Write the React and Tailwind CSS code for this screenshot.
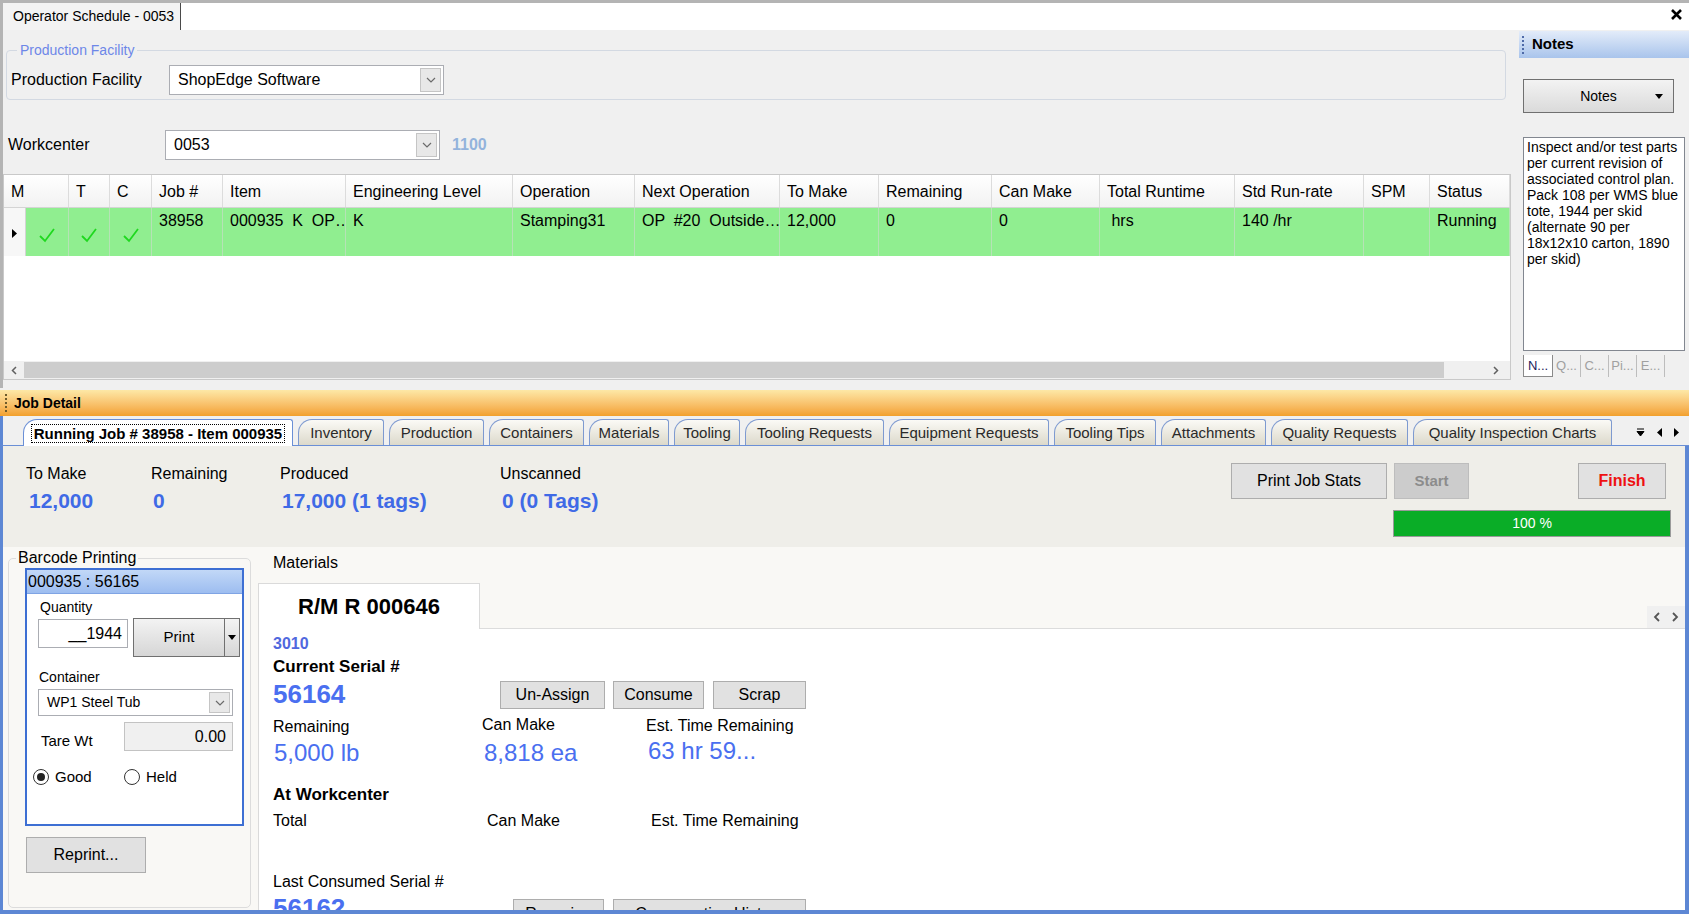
import React from 'react';

const COLS = [
  { w: 'w-[65px]', label: 'M' },
  { w: 'w-[41px]', label: 'T' },
  { w: 'w-[42px]', label: 'C' },
  { w: 'w-[71px]', label: 'Job #' },
  { w: 'w-[123px]', label: 'Item' },
  { w: 'w-[167px]', label: 'Engineering Level' },
  { w: 'w-[122px]', label: 'Operation' },
  { w: 'w-[145px]', label: 'Next Operation' },
  { w: 'w-[99px]', label: 'To Make' },
  { w: 'w-[113px]', label: 'Remaining' },
  { w: 'w-[108px]', label: 'Can Make' },
  { w: 'w-[135px]', label: 'Total Runtime' },
  { w: 'w-[129px]', label: 'Std Run-rate' },
  { w: 'w-[66px]', label: 'SPM' },
  { w: 'flex-1', label: 'Status' },
];

const ROW = [
  { w: 'w-[71px]', v: '38958' },
  { w: 'w-[123px]', v: '000935  K  OP…' },
  { w: 'w-[167px]', v: 'K' },
  { w: 'w-[122px]', v: 'Stamping31' },
  { w: 'w-[145px]', v: 'OP  #20  Outside…' },
  { w: 'w-[99px]', v: '12,000' },
  { w: 'w-[113px]', v: '0' },
  { w: 'w-[108px]', v: '0' },
  { w: 'w-[135px]', v: ' hrs' },
  { w: 'w-[129px]', v: '140 /hr' },
  { w: 'w-[66px]', v: '' },
  { w: 'flex-1', v: 'Running' },
];

const TABS = [
  { w: 'w-[86px]', label: 'Inventory' },
  { w: 'w-[95px]', label: 'Production' },
  { w: 'w-[95px]', label: 'Containers' },
  { w: 'w-[80px]', label: 'Materials' },
  { w: 'w-[66px]', label: 'Tooling' },
  { w: 'w-[139px]', label: 'Tooling Requests' },
  { w: 'w-[160px]', label: 'Equipment Requests' },
  { w: 'w-[102px]', label: 'Tooling Tips' },
  { w: 'w-[105px]', label: 'Attachments' },
  { w: 'w-[137px]', label: 'Quality Requests' },
  { w: 'w-[199px]', label: 'Quality Inspection Charts' },
];

function Chevron() {
  return (
    <svg width="10" height="6" viewBox="0 0 10 6">
      <path d="M1 1l4 4 4-4" fill="none" stroke="#6b6b6b" strokeWidth="1.2" />
    </svg>
  );
}

function Combo({ className, value, text = 'text-[16px]' }) {
  return (
    <div className={`flex items-center bg-white border border-[#abadb3] ${className}`}>
      <span className={`flex-1 pl-[8px] ${text}`}>{value}</span>
      <div className="w-[21px] self-stretch my-[2px] mr-[2px] bg-[#e8e8e8] border border-[#c5c5c5] flex items-center justify-center">
        <Chevron />
      </div>
    </div>
  );
}

function Check() {
  return (
    <svg width="18" height="16" viewBox="0 0 18 16">
      <path d="M2 9l5 5L16 2" fill="none" stroke="#1fd81f" strokeWidth="1.8" />
    </svg>
  );
}

function Grip({ color }) {
  return <div className={`w-[2px] h-[18px] border-l-[2px] border-dotted ${color}`} />;
}

function Caret({ color = '#000' }) {
  return (
    <svg width="8" height="5" viewBox="0 0 8 5">
      <path d="M0 0h8L4 5z" fill={color} />
    </svg>
  );
}

function GrayButton({ className, children }) {
  return (
    <div className={`flex items-center justify-center bg-[#e1e1e1] border border-[#adadad] text-[16px] ${className}`}>
      {children}
    </div>
  );
}

export default function App() {
  return (
    <div className="w-[1689px] h-[914px] overflow-hidden bg-[#f0f0f0] font-['Liberation_Sans',Arial,sans-serif] text-black flex flex-col">
      {/* window strip */}
      <div className="h-[30px] shrink-0 flex border-t-[3px] border-l-[3px] border-[#b4b4b4] bg-white">
        <div className="w-[178px] bg-[#f3f3f3] border-r border-[#4a4a4a] flex items-center pl-[10px] text-[14px]">
          Operator Schedule - 0053
        </div>
        <div className="flex-1" />
        <div className="w-[26px] flex items-center justify-center pb-[4px]">
          <svg width="11" height="11" viewBox="0 0 11 11">
            <path d="M1 1l9 9M10 1l-9 9" stroke="#000" strokeWidth="2.6" />
          </svg>
        </div>
      </div>

      {/* top section */}
      <div className="h-[358px] shrink-0 flex border-l-[3px] border-[#b4b4b4]">
        <div className="w-[1508px] flex flex-col">
          <fieldset className="ml-[3px] mt-[12px] w-[1500px] h-[58px] border border-[#d3d9e2] rounded-[4px] pl-[4px]">
            <legend className="ml-[6px] px-[3px] text-[14px] leading-[16px] text-[#6d87e8]">Production Facility</legend>
            <div className="flex items-center mt-[7px] h-[30px]">
              <span className="w-[158px] text-[16px]">Production Facility</span>
              <Combo className="w-[275px] h-[30px]" value="ShopEdge Software" />
            </div>
          </fieldset>

          <div className="flex items-center mt-[30px] h-[30px] pl-[5px]">
            <span className="w-[157px] text-[16px]">Workcenter</span>
            <Combo className="w-[275px] h-[30px]" value="0053" />
            <span className="ml-[12px] text-[16px] font-bold text-[#93b3dc]">1100</span>
          </div>

          {/* grid */}
          <div className="mt-[14px] w-[1508px] h-[206px] bg-white border border-[#c9c9c9] flex flex-col">
            <div className="flex h-[33px] shrink-0 border-b border-[#d4d4d4] bg-gradient-to-b from-white to-[#f2f2f2]">
              {COLS.map((c) => (
                <div key={c.label} className={`${c.w} border-r border-[#dcdcdc] flex items-center pl-[7px] pt-[2px] text-[16px]`}>
                  {c.label}
                </div>
              ))}
            </div>
            <div className="flex h-[48px] shrink-0">
              <div className="w-[22px] bg-[#f7f7f7] border-r border-[#d4d4d4] flex items-center justify-center pt-[3px]">
                <svg width="5" height="9" viewBox="0 0 5 9"><path d="M0 0l5 4.5L0 9z" fill="#000" /></svg>
              </div>
              {['w-[43px]', 'w-[41px]', 'w-[42px]'].map((w) => (
                <div key={w} className={`${w} bg-[#90ee90] border-r border-[#b6e2b6] flex items-center justify-center pt-[6px]`}>
                  <Check />
                </div>
              ))}
              {ROW.map((c, i) => (
                <div key={i} className={`${c.w} bg-[#90ee90] border-r border-[#b6e2b6] pl-[7px] pt-[1px] text-[16px] whitespace-pre`}>
                  {c.v}
                </div>
              ))}
            </div>
            <div className="flex-1" />
            <div className="h-[18px] shrink-0 flex items-center bg-[#f0f0f0]">
              <div className="w-[20px] flex justify-center">
                <svg width="6" height="9" viewBox="0 0 6 9"><path d="M5 1L1.5 4.5 5 8" fill="none" stroke="#606060" strokeWidth="1.5" /></svg>
              </div>
              <div className="w-[1420px] h-[16px] bg-[#cdcdcd]" />
              <div className="flex-1" />
              <div className="w-[20px] flex justify-center mr-[4px]">
                <svg width="6" height="9" viewBox="0 0 6 9"><path d="M1 1l3.5 3.5L1 8" fill="none" stroke="#606060" strokeWidth="1.5" /></svg>
              </div>
            </div>
          </div>
        </div>

        {/* notes panel */}
        <div className="ml-[8px] w-[170px] flex flex-col">
          <div className="mt-[1px] h-[27px] bg-gradient-to-b from-[#e3ecf9] to-[#a9c4ec] flex items-center pl-[3px]">
            <Grip color="border-[#4e6aa8]" />
            <span className="ml-[8px] text-[15px] font-bold">Notes</span>
          </div>
          <div className="mt-[21px] ml-[4px] w-[151px] h-[34px] border border-[#707070] bg-gradient-to-b from-[#f3f3f3] to-[#dadada] flex items-center justify-center relative text-[14px]">
            Notes
            <span className="absolute right-[10px] top-[14px]"><Caret /></span>
          </div>
          <div className="mt-[24px] ml-[4px] w-[162px] h-[214px] bg-white border border-[#828790] px-[3px] pt-[1px] text-[14px] leading-[16px]">
            Inspect and/or test parts per current revision of associated control plan. Pack 108 per WMS blue tote, 1944 per skid (alternate 90 per 18x12x10 carton, 1890 per skid)
          </div>
          <div className="mt-[4px] ml-[4px] h-[22px] flex items-stretch text-[13px] text-[#a0a0a0]">
            <div className="w-[30px] bg-white border border-t-0 border-[#8a8a8a] flex items-center justify-center text-[#1c1c5c]">N...</div>
            <div className="w-[28px] flex items-center justify-center border-r border-[#bdbdbd]">Q...</div>
            <div className="w-[28px] flex items-center justify-center border-r border-[#bdbdbd]">C...</div>
            <div className="w-[28px] flex items-center justify-center border-r border-[#bdbdbd]">Pi...</div>
            <div className="w-[28px] flex items-center justify-center border-r border-[#bdbdbd]">E...</div>
          </div>
        </div>
      </div>

      {/* job detail bar */}
      <div className="mt-[2px] h-[26px] shrink-0 bg-gradient-to-b from-[#fde8a6] to-[#f2a02b] flex items-center pl-[5px]">
        <Grip color="border-[#6d5a2a]" />
        <span className="ml-[7px] text-[14px] font-bold">Job Detail</span>
      </div>

      {/* tab strip */}
      <div className="h-[30px] shrink-0 flex items-end pl-[20px] pr-[6px] border-b border-[#6a8fd6] border-l-[3px] border-l-[#5d87d4]">
        <div className="w-[270px] h-[27px] mb-[-1px] bg-white border border-b-0 border-[#6a8fd6] rounded-tl-[14px] rounded-tr-[3px] flex items-center justify-center pt-[1px]">
          <span className="border border-dotted border-black px-[2px] text-[15px] leading-[17px] font-bold">Running Job # 38958 - Item 000935</span>
        </div>
        {TABS.map((t) => (
          <div key={t.label} className={`${t.w} ml-[5px] h-[26px] bg-gradient-to-b from-[#fbfaf6] to-[#dcd9cb] border border-b-0 border-[#7e9ad0] rounded-tl-[14px] rounded-tr-[3px] flex items-center justify-center pt-[2px] text-[15px] text-[#2a2a2a]`}>
            {t.label}
          </div>
        ))}
        <div className="flex-1 h-[26px] flex items-center justify-end gap-[12px] pr-[4px]">
          <svg width="9" height="9" viewBox="0 0 9 9"><path d="M1 1h7M1 3.5h7L4.5 8z" stroke="#000" fill="#000" strokeWidth="1" /></svg>
          <svg width="5" height="9" viewBox="0 0 5 9"><path d="M5 0L0 4.5 5 9z" fill="#000" /></svg>
          <svg width="5" height="9" viewBox="0 0 5 9"><path d="M0 0l5 4.5L0 9z" fill="#000" /></svg>
        </div>
      </div>

      {/* job detail content */}
      <div className="flex-1 min-h-0 overflow-hidden flex flex-col border-l-[3px] border-r-[4px] border-b-[4px] border-[#5d87d4]">
        <div className="h-[101px] shrink-0 bg-[#efeee9] flex">
          <div className="flex pl-[23px] pt-[19px]">
            <div className="w-[125px]">
              <div className="text-[16px] leading-[18px]">To Make</div>
              <div className="mt-[6px] ml-[3px] text-[21px] leading-[24px] font-bold text-[#3f6ae6]">12,000</div>
            </div>
            <div className="w-[129px]">
              <div className="text-[16px] leading-[18px]">Remaining</div>
              <div className="mt-[6px] ml-[2px] text-[21px] leading-[24px] font-bold text-[#3f6ae6]">0</div>
            </div>
            <div className="w-[220px]">
              <div className="text-[16px] leading-[18px]">Produced</div>
              <div className="mt-[6px] ml-[2px] text-[21px] leading-[24px] font-bold text-[#3f6ae6]">17,000 (1 tags)</div>
            </div>
            <div>
              <div className="text-[16px] leading-[18px]">Unscanned</div>
              <div className="mt-[6px] ml-[2px] text-[21px] leading-[24px] font-bold text-[#3f6ae6]">0 (0 Tags)</div>
            </div>
          </div>
          <div className="ml-auto mr-[14px] w-[440px] pt-[17px] flex flex-col">
            <div className="flex h-[36px]">
              <GrayButton className="w-[156px] text-[15px]">Print Job Stats</GrayButton>
              <div className="ml-[7px] w-[75px] bg-[#cccccc] border border-[#bdbdbd] flex items-center justify-center text-[15px] font-bold text-[#8c8c8c]">Start</div>
              <GrayButton className="ml-auto mr-[5px] w-[88px] font-bold text-[#ee1111]">Finish</GrayButton>
            </div>
            <div className="mt-[11px] ml-[162px] h-[27px] bg-[#0aad27] border border-[#9a9a9a] flex items-center justify-center text-[14px] text-white">
              100 %
            </div>
          </div>
        </div>

        <div className="flex-1 min-h-0 bg-[#f9f8f5] flex overflow-hidden">
          {/* barcode printing */}
          <fieldset className="ml-[5px] mt-[2px] w-[243px] h-[359px] shrink-0 border border-[#dcdcdc] rounded-[5px]">
            <legend className="ml-[7px] px-[2px] text-[16px] leading-[18px]">Barcode Printing</legend>
            <div className="ml-[16px] mt-[1px] w-[219px] h-[258px] bg-white border-2 border-[#3d6fd3] flex flex-col">
              <div className="h-[24px] bg-gradient-to-b from-[#c2d8f7] to-[#9dbdf0] border-b border-[#7fa4e4] pl-[1px] text-[16px] leading-[24px]">
                000935 : 56165
              </div>
              <div className="pl-[13px] mt-[5px] text-[14px] leading-[16px]">Quantity</div>
              <div className="flex pl-[11px] mt-[3px]">
                <div className="mt-[1px] w-[90px] h-[29px] border border-[#abadb3] bg-white text-[16px] text-right pr-[5px] leading-[27px]">__1944</div>
                <div className="ml-[5px] w-[107px] h-[39px] border border-[#707070] bg-gradient-to-b from-[#f3f3f3] to-[#d6d6d6] flex">
                  <div className="flex-1 flex items-center justify-center text-[15px] border-r border-[#707070]">Print</div>
                  <div className="w-[14px] flex items-center justify-center"><Caret /></div>
                </div>
              </div>
              <div className="pl-[12px] mt-[12px] text-[14px] leading-[16px]">Container</div>
              <div className="pl-[11px] mt-[4px]">
                <Combo className="w-[195px] h-[27px]" value="WP1 Steel Tub" text="text-[14px]" />
              </div>
              <div className="flex items-start pl-[14px] mt-[6px]">
                <span className="w-[83px] mt-[10px] text-[15px] leading-[18px]">Tare Wt</span>
                <div className="w-[109px] h-[29px] border border-[#c3c3c3] bg-[#f0f0f0] text-[16px] text-right pr-[6px] leading-[27px]">0.00</div>
              </div>
              <div className="flex items-center pl-[6px] mt-[15px] text-[15px]">
                <div className="w-[16px] h-[16px] rounded-full border border-[#333] bg-white flex items-center justify-center">
                  <div className="w-[8px] h-[8px] rounded-full bg-[#222]" />
                </div>
                <span className="ml-[6px] w-[69px]">Good</span>
                <div className="w-[16px] h-[16px] rounded-full border border-[#333] bg-white" />
                <span className="ml-[6px]">Held</span>
              </div>
            </div>
            <GrayButton className="ml-[17px] mt-[11px] w-[120px] h-[36px]">Reprint...</GrayButton>
          </fieldset>

          {/* materials */}
          <div className="ml-[7px] flex-1 flex flex-col">
            <div className="ml-[15px] mt-[7px] text-[16px] leading-[18px]">Materials</div>
            <div className="mt-[11px] flex-1 flex flex-col">
              <div className="h-[46px] shrink-0 flex">
                <div className="w-[222px] bg-white border border-b-0 border-[#dadada] flex items-center justify-center text-[22px] font-bold">
                  R/M R 000646
                </div>
                <div className="flex-1 border-b border-[#dcdcdc] flex items-end justify-end">
                  <div className="w-[38px] h-[22px] bg-[#f0f0f0] flex items-center justify-around">
                    <svg width="7" height="10" viewBox="0 0 7 10"><path d="M6 1L2 5l4 4" fill="none" stroke="#555" strokeWidth="1.8" /></svg>
                    <svg width="7" height="10" viewBox="0 0 7 10"><path d="M1 1l4 4-4 4" fill="none" stroke="#555" strokeWidth="1.8" /></svg>
                  </div>
                </div>
              </div>
              <div className="flex-1 bg-white border-l border-[#dadada] pl-[14px] flex flex-col">
                <div className="mt-[6px] h-[18px] text-[16px] leading-[18px] font-bold text-[#5068de]">3010</div>
                <div className="mt-[4px] h-[20px] text-[17px] leading-[20px] font-bold">Current Serial #</div>
                <div className="flex h-[33px]">
                  <div className="w-[227px] mt-[2px] text-[26px] leading-[30px] font-bold text-[#4a6ff0]">56164</div>
                  <div className="mt-[4px] flex h-[28px]">
                    <GrayButton className="w-[105px]">Un-Assign</GrayButton>
                    <GrayButton className="ml-[8px] w-[91px]">Consume</GrayButton>
                    <GrayButton className="ml-[9px] w-[93px]">Scrap</GrayButton>
                  </div>
                </div>
                <div className="mt-[8px] flex h-[18px] text-[16px] leading-[18px]">
                  <div className="w-[209px]">Remaining</div>
                  <div className="w-[164px] -mt-[2px]">Can Make</div>
                  <div className="-mt-[1px]">Est. Time Remaining</div>
                </div>
                <div className="mt-[3px] flex h-[28px] text-[24px] leading-[28px] text-[#4a6ff0]">
                  <div className="w-[209px] pl-[1px]">5,000 lb</div>
                  <div className="w-[164px] pl-[2px]">8,818 ea</div>
                  <div className="pl-[2px] -mt-[2px]">63 hr 59...</div>
                </div>
                <div className="mt-[18px] h-[20px] text-[17px] leading-[20px] font-bold">At Workcenter</div>
                <div className="mt-[7px] flex h-[18px] text-[16px] leading-[18px]">
                  <div className="w-[214px]">Total</div>
                  <div className="w-[164px]">Can Make</div>
                  <div>Est. Time Remaining</div>
                </div>
                <div className="mt-[43px] h-[18px] text-[16px] leading-[18px]">Last Consumed Serial #</div>
                <div className="flex h-[40px] shrink-0">
                  <div className="w-[240px] mt-[2px] text-[26px] leading-[30px] font-bold text-[#4a6ff0]">56162</div>
                  <div className="mt-[8px] flex h-[30px]">
                    <GrayButton className="w-[91px]">Reassign</GrayButton>
                    <GrayButton className="ml-[9px] w-[193px]">Consumption History</GrayButton>
                  </div>
                </div>
              </div>
            </div>
          </div>
        </div>
      </div>
    </div>
  );
}
